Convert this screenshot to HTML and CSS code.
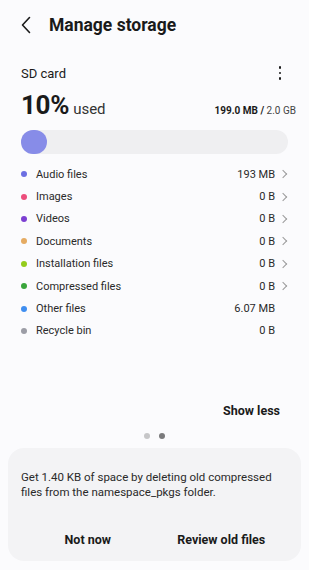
FILE: index.html
```html
<!DOCTYPE html>
<html lang="en">
<head>
    <meta charset="UTF-8">
    <meta name="viewport" content="width=device-width, initial-scale=1.0">
    <title>Manage storage</title>
    <link rel="stylesheet" href="styles.css">
</head>
<body>
    <div class="screen">
        <div class="top-bar">
            <button class="back" aria-label="Back">
                <svg width="12" height="18" viewBox="0 0 12 18"><path d="M9.5 1.5 L2.5 9 L9.5 16.5" fill="none" stroke="#1a1a1a" stroke-width="1.6" stroke-linecap="round" stroke-linejoin="round"/></svg>
            </button>
            <h1>Manage storage</h1>
        </div>

        <div class="storage">
            <div class="storage-head">
                <span class="name">SD card</span>
                <span class="more">
                    <i></i><i></i><i></i>
                </span>
            </div>
            <div class="usage">
                <div><span class="pct">10%</span> <span class="used">used</span></div>
                <div class="total"><b>199.0 MB /</b> 2.0 GB</div>
            </div>
            <div class="bar"><div class="fill"></div></div>

            <ul class="files">
                <li><span class="dot audio"></span><span class="label">Audio files</span><span class="size">193 MB</span><span class="arrow"></span></li>
                <li><span class="dot images"></span><span class="label">Images</span><span class="size">0 B</span><span class="arrow"></span></li>
                <li><span class="dot videos"></span><span class="label">Videos</span><span class="size">0 B</span><span class="arrow"></span></li>
                <li><span class="dot docs"></span><span class="label">Documents</span><span class="size">0 B</span><span class="arrow"></span></li>
                <li><span class="dot install"></span><span class="label">Installation files</span><span class="size">0 B</span><span class="arrow"></span></li>
                <li><span class="dot zip"></span><span class="label">Compressed files</span><span class="size">0 B</span><span class="arrow"></span></li>
                <li><span class="dot other"></span><span class="label">Other files</span><span class="size">6.07 MB</span><span class="no-arrow"></span></li>
                <li><span class="dot bin"></span><span class="label">Recycle bin</span><span class="size">0 B</span><span class="no-arrow"></span></li>
            </ul>

            <div class="show-less">Show less</div>
        </div>

        <div class="pager"><span></span><span class="on"></span></div>

        <div class="tip">
            <p>Get 1.40 KB of space by deleting old compressed files from the namespace_pkgs folder.</p>
            <div class="actions">
                <button>Not now</button>
                <button>Review old files</button>
            </div>
        </div>
    </div>
</body>
</html>
```

FILE: styles.css
```css
body {
    margin: 0;
    background: #fbfbfd;
    font-family: Roboto, "Noto Sans", sans-serif;
    color: #1a1a1a;
}

.screen {
    width: 309px;
    height: 570px;
    display: flex;
    flex-direction: column;
}

.top-bar {
    display: flex;
    align-items: center;
    height: 46px;
    padding: 2px 0 0 20px;
}

.back {
    background: none;
    border: none;
    padding: 0;
    width: 29px;
    display: flex;
    align-items: center;
}

h1 {
    margin: 0;
    font-size: 17.5px;
    font-weight: 700;
}

.storage {
    padding: 0 21px;
    margin-top: 15px;
}

.storage-head {
    display: flex;
    justify-content: space-between;
    align-items: center;
    height: 20px;
}

.name {
    font-size: 13px;
}

.more {
    display: flex;
    flex-direction: column;
    gap: 3px;
    margin-right: 7px;
}

.more i {
    width: 2.5px;
    height: 2.5px;
    border-radius: 50%;
    background: #1a1a1a;
}

.usage {
    display: flex;
    justify-content: space-between;
    align-items: baseline;
    margin-top: 7px;
}

.pct {
    font-size: 26px;
    font-weight: 700;
    letter-spacing: -0.3px;
}

.used {
    font-size: 15px;
    color: #333;
}

.total {
    font-size: 10px;
    color: #444;
    margin-right: -8px;
}

.total b {
    color: #1a1a1a;
}

.bar {
    height: 24px;
    border-radius: 12px;
    background: #efeff1;
    margin-top: 10px;
}

.fill {
    width: 26px;
    height: 24px;
    border-radius: 12px;
    background: #878ce8;
}

.files {
    list-style: none;
    margin: 9px 0 0;
    padding: 0;
}

.files li {
    display: flex;
    align-items: center;
    height: 22.4px;
    font-size: 11px;
}

.dot {
    width: 6px;
    height: 6px;
    border-radius: 50%;
    margin: 0 9px 0 0;
}

.audio { background: #6c6fe2; }
.images { background: #ec4d7c; }
.videos { background: #7c3fd2; }
.docs { background: #e5ab62; }
.install { background: #94cc1c; }
.zip { background: #3aa53c; }
.other { background: #3f8ef0; }
.bin { background: #9c9da6; }

.label {
    flex: 1;
    color: #2a2a2a;
}

.size {
    color: #2a2a2a;
}

.arrow,
.no-arrow {
    width: 13px;
    height: 8px;
}

.arrow {
    position: relative;
}

.arrow::after {
    content: "";
    position: absolute;
    left: 5px;
    top: 1px;
    width: 5px;
    height: 5px;
    border-top: 1px solid #9a9a9a;
    border-right: 1px solid #9a9a9a;
    transform: rotate(45deg);
}

.show-less {
    text-align: right;
    font-size: 12.5px;
    font-weight: 700;
    margin-top: 61px;
    margin-right: 8px;
}

.pager {
    display: flex;
    justify-content: center;
    gap: 9px;
    margin-top: 15px;
}

.pager span {
    width: 6px;
    height: 6px;
    border-radius: 50%;
    background: #c6c6c8;
}

.pager span.on {
    background: #7a7a7c;
}

.tip {
    margin: 9px 8px 0;
    background: #f3f3f5;
    border-radius: 16px;
    padding: 22px 13px 0;
    height: 91px;
}

.tip p {
    margin: 0;
    font-size: 11.5px;
    line-height: 15px;
    color: #2a2a2a;
}

.actions {
    display: flex;
    margin-top: 32px;
}

.actions button {
    flex: 1;
    background: none;
    border: none;
    font-family: inherit;
    font-size: 12.5px;
    font-weight: 700;
    color: #1a1a1a;
    padding: 0;
}
```
